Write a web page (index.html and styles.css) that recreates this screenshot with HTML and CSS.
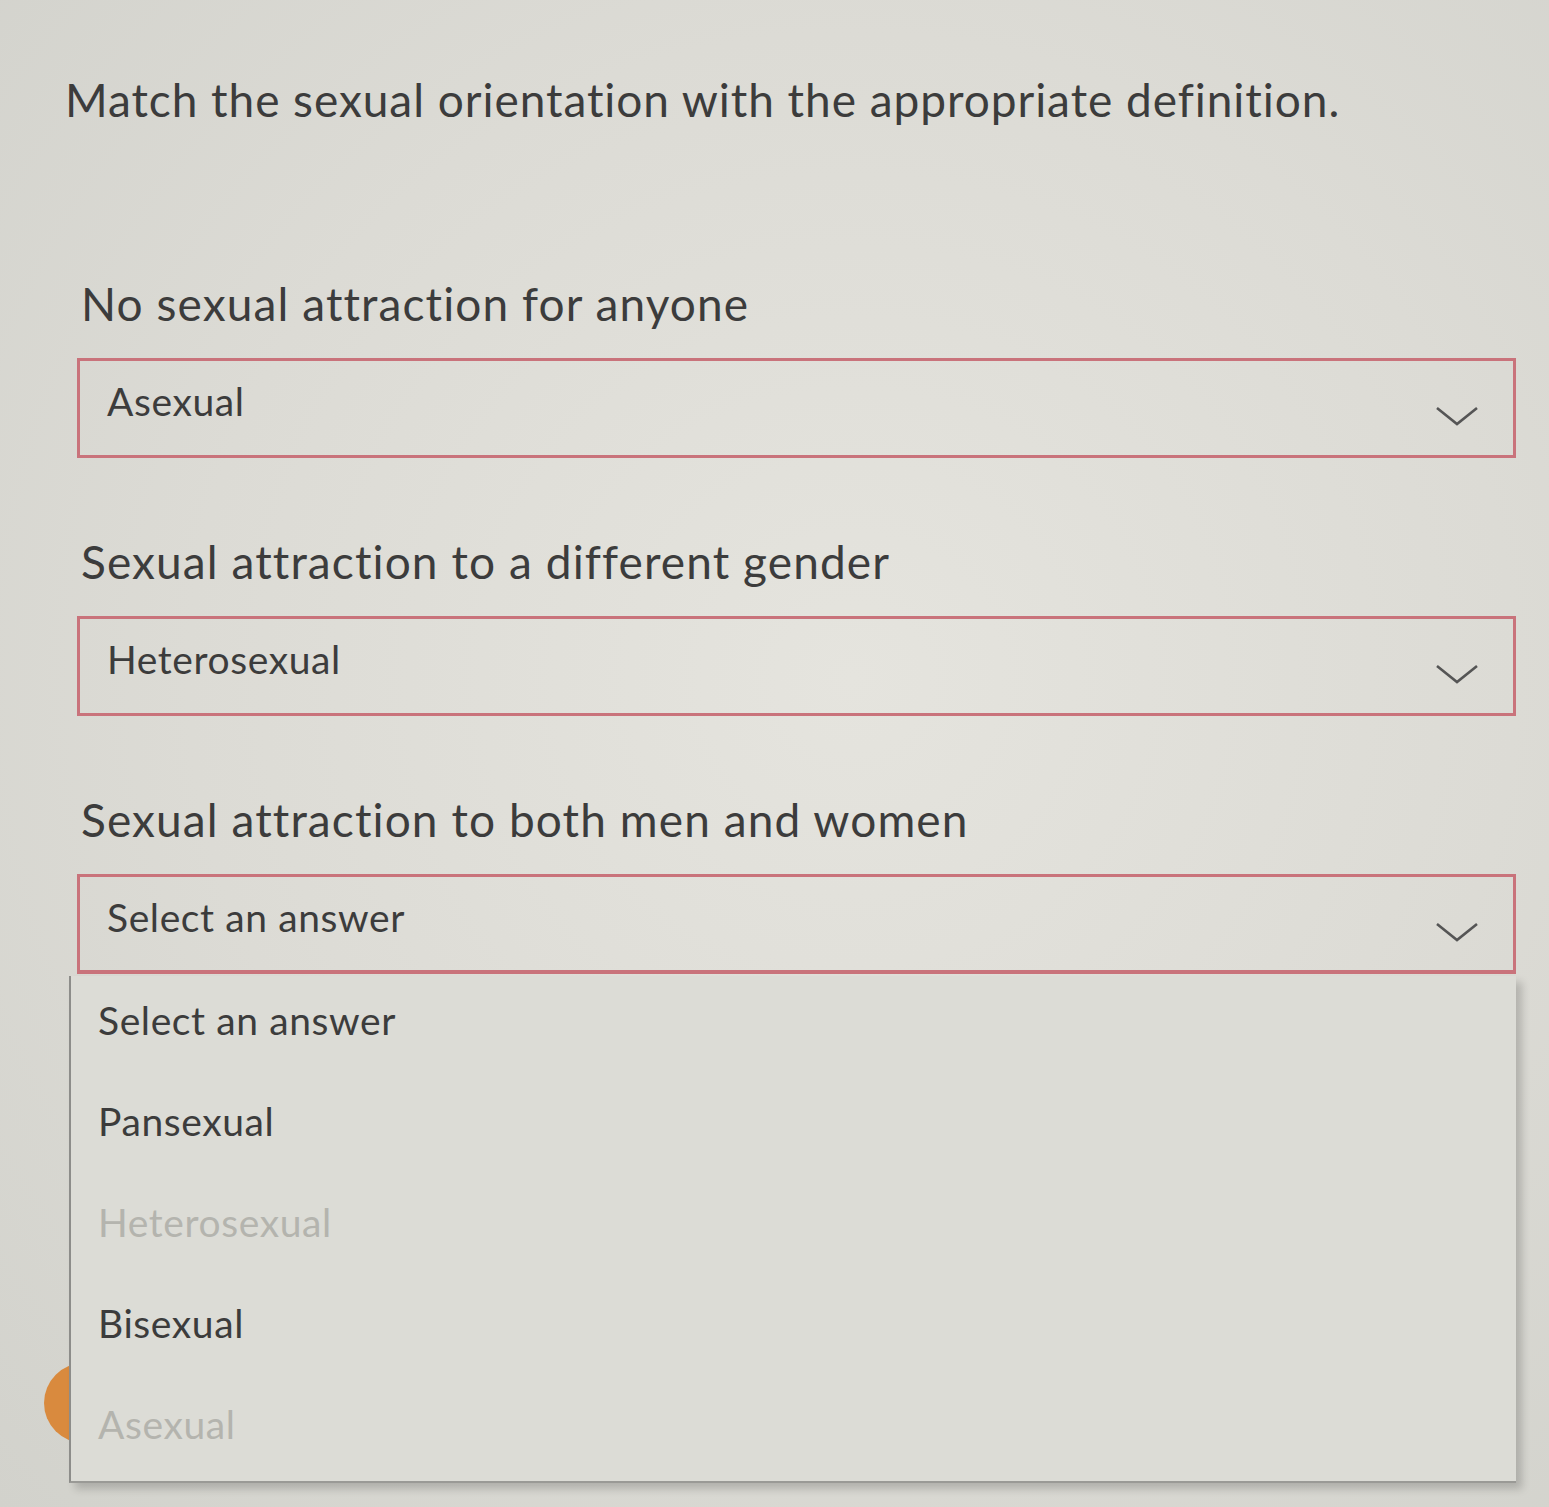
FILE: index.html
```html
<!DOCTYPE html>
<html lang="en">
<head>
<meta charset="utf-8">
<title>Match question</title>
<link rel="stylesheet" href="styles.css">
</head>
<body>
<main class="page">
  <h1 class="question">Match the sexual orientation with the appropriate definition.</h1>

  <section class="item item-first">
    <p class="label">No sexual attraction for anyone</p>
    <div class="select">
      <span class="value">Asexual</span>
      <svg class="chev" viewBox="0 0 44 22" aria-hidden="true"><path d="M2 3 L22 19 L42 3"/></svg>
    </div>
  </section>

  <section class="item">
    <p class="label">Sexual attraction to a different gender</p>
    <div class="select">
      <span class="value">Heterosexual</span>
      <svg class="chev" viewBox="0 0 44 22" aria-hidden="true"><path d="M2 3 L22 19 L42 3"/></svg>
    </div>
  </section>

  <section class="item item-open">
    <p class="label">Sexual attraction to both men and women</p>
    <div class="dropdown-wrap">
      <span class="orange-dot"></span>
      <div class="select select-open">
        <span class="value">Select an answer</span>
        <svg class="chev" viewBox="0 0 44 22" aria-hidden="true"><path d="M2 3 L22 19 L42 3"/></svg>
      </div>
      <ul class="menu">
        <li class="opt">Select an answer</li>
        <li class="opt">Pansexual</li>
        <li class="opt opt-disabled">Heterosexual</li>
        <li class="opt">Bisexual</li>
        <li class="opt opt-disabled">Asexual</li>
      </ul>
    </div>
  </section>
</main>
</body>
</html>
```
FILE: styles.css
```css
html, body {
  margin: 0;
  padding: 0;
}
body {
  width: 1549px;
  height: 1507px;
  overflow: hidden;
  background: radial-gradient(ellipse at 55% 45%, #e5e4de 0%, #dcdbd5 55%, #d2d2cc 100%);
  font-family: "Lato", "Open Sans", "Liberation Sans", sans-serif;
  color: #3c3c3c;
}
.page {
  padding: 70px 33px 0 77px;
}
.question {
  margin: 0 0 0 -12px;
  font-size: 46px;
  font-weight: 400;
  line-height: 60px;
  letter-spacing: 0.95px;
  color: #3c3c3c;
}
.item {
  margin-top: 76px;
}
.item-first {
  margin-top: 146px;
}
.label {
  margin: 0 0 26px 4px;
  font-size: 46px;
  line-height: 56px;
  letter-spacing: 1.1px;
}
.select {
  box-sizing: border-box;
  height: 100px;
  border: 3px solid #c9737b;
  display: flex;
  align-items: center;
  justify-content: space-between;
  padding: 0 34px 0 27px;
  background: transparent;
}
.value {
  font-size: 39px;
  letter-spacing: 0.6px;
  color: #3c3c3c;
  margin-top: -14px;
}
.chev {
  width: 44px;
  height: 22px;
  margin-top: 16px;
}
.chev path {
  fill: none;
  stroke: #555;
  stroke-width: 2.6;
  stroke-linejoin: miter;
}
.dropdown-wrap {
  position: relative;
}
.select-open {
  border-bottom-width: 4px;
}
.orange-dot {
  position: absolute;
  left: -33px;
  top: 489px;
  width: 80px;
  height: 80px;
  border-radius: 50%;
  background: #d98a3e;
}
.menu {
  position: absolute;
  left: -8px;
  right: 0;
  top: 102px;
  margin: 0;
  padding: 0;
  list-style: none;
  background: #dcdcd6;
  border-left: 2px solid #8d8d8a;
  border-bottom: 2px solid #9a9a96;
  box-shadow: 6px 6px 8px rgba(0,0,0,0.18);
  z-index: 2;
}
.opt {
  box-sizing: border-box;
  height: 101px;
  display: flex;
  align-items: center;
  padding: 0 0 14px 27px;
  font-size: 39px;
  letter-spacing: 0.6px;
  color: #3c3c3c;
}
.opt-disabled {
  color: #b4b4ae;
}
```
